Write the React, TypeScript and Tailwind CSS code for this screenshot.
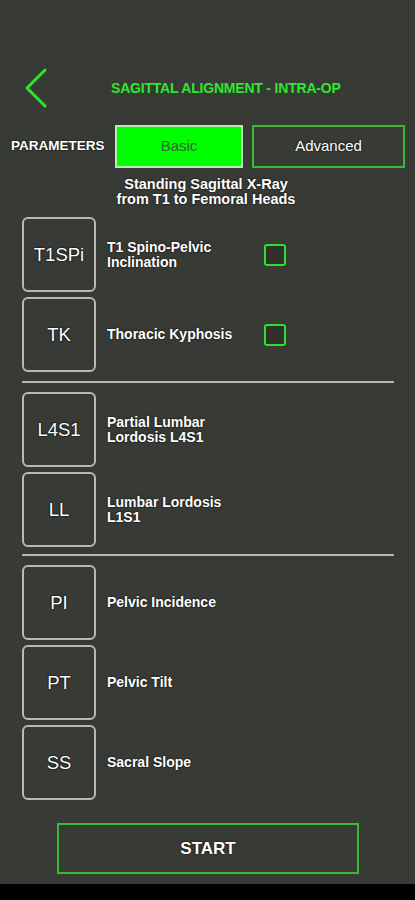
import React from "react";

const font = { fontFamily: '"Liberation Sans", Arial, sans-serif' };

function Box({ label }: { label: string }) {
  return (
    <div className="w-[74px] h-[75px] shrink-0 rounded-[6px] border-2 border-[#b8b9b4] flex items-center justify-center text-[18.5px] text-white [text-shadow:0_0_2px_#000,0_0_1px_#000]">
      {label}
    </div>
  );
}

function Row({ label, desc, check }: { label: string; desc: string[]; check?: boolean }) {
  return (
    <div className="flex items-center h-[75px]">
      <Box label={label} />
      <div className="ml-[11px] w-[157px] text-[14px] leading-[15px] text-white font-semibold [text-shadow:0_0_2px_#000]">
        {desc.map((d, i) => (
          <div key={i}>{d}</div>
        ))}
      </div>
      {check && <div className="w-[22px] h-[22px] rounded-[3px] border-2 border-[#2ee02e] bg-[#2f302c]" />}
    </div>
  );
}

export default function App() {
  return (
    <div style={font} className="w-[415px] h-[900px] bg-[#383a35] flex flex-col relative">
      <div className="h-[67px]" />
      <div className="flex items-center h-[42px]">
        <div className="w-[111px] pl-[23px] flex items-center">
          <svg width="26" height="42" viewBox="0 0 26 42">
            <polyline points="22,3 4,21 22,39" fill="none" stroke="#2ee82e" strokeWidth="3" strokeLinecap="round" strokeLinejoin="round" />
          </svg>
        </div>
        <div className="text-[14px] font-bold text-[#2ee82e] tracking-[-0.2px]">SAGITTAL ALIGNMENT - INTRA-OP</div>
      </div>
      <div className="h-[16px]" />
      <div className="flex items-center h-[43px]">
        <div className="w-[115px] pl-[11px] text-[13.5px] font-semibold text-white [text-shadow:0_0_2px_#000]">PARAMETERS</div>
        <div className="w-[128px] h-[43px] bg-[#00ff00] border-2 border-[#b9e9b4] flex items-center justify-center text-[15px] text-[#2c6b2a]">
          Basic
        </div>
        <div className="ml-[9px] w-[153px] h-[43px] border-2 border-[#3ab83a] flex items-center justify-center text-[15px] text-white [text-shadow:0_0_2px_#000]">
          Advanced
        </div>
      </div>
      <div className="mt-[9px] text-center w-[412px] text-[14.5px] leading-[15px] font-semibold text-white [text-shadow:0_0_2px_#000]">
        <div>Standing Sagittal X-Ray</div>
        <div>from T1 to Femoral Heads</div>
      </div>
      <div className="mt-[10px] pl-[22px] flex flex-col gap-[5px]">
        <Row label="T1SPi" desc={["T1 Spino-Pelvic", "Inclination"]} check />
        <Row label="TK" desc={["Thoracic Kyphosis"]} check />
      </div>
      <div className="h-[2px] bg-[#b8b9b4] ml-[22px] mr-[21px] mt-[9px] mb-[9px]" />
      <div className="pl-[22px] flex flex-col gap-[5px]">
        <Row label="L4S1" desc={["Partial Lumbar", "Lordosis L4S1"]} />
        <Row label="LL" desc={["Lumbar Lordosis", "L1S1"]} />
      </div>
      <div className="h-[2px] bg-[#b8b9b4] ml-[22px] mr-[21px] mt-[7px] mb-[9px]" />
      <div className="pl-[22px] flex flex-col gap-[5px]">
        <Row label="PI" desc={["Pelvic Incidence"]} />
        <Row label="PT" desc={["Pelvic Tilt"]} />
        <Row label="SS" desc={["Sacral Slope"]} />
      </div>
      <div className="mt-[23px] ml-[57px] w-[302px] h-[51px] border-2 border-[#3ab83a] flex items-center justify-center text-[17px] font-semibold text-white [text-shadow:0_0_2px_#000]">
        START
      </div>
      <div className="absolute left-0 right-0 bottom-0 h-[16px] bg-black" />
    </div>
  );
}
